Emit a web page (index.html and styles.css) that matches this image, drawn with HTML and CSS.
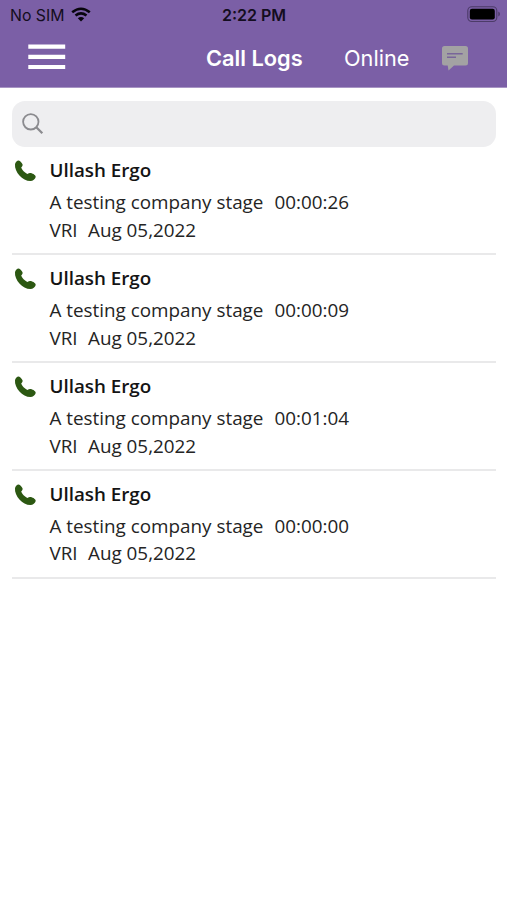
FILE: index.html
```html
<!DOCTYPE html>
<html lang="en">
<head>
<meta charset="utf-8">
<meta name="viewport" content="width=device-width">
<title>Call Logs</title>
<link rel="stylesheet" href="styles.css">
</head>
<body>
<svg width="0" height="0" class="defs" aria-hidden="true">
  <symbol id="phone" viewBox="0 0 22 22"><path d="M1 4.2C1.2 2.2 2.8 .5 4.8 .4C6 .4 8 2.8 8.6 4.5C8.8 5.7 8.2 6.6 7.2 7.6C7.8 9.8 10.9 13 13.6 14C14.5 13.2 15.5 12.9 16.7 13.1C19.4 13.6 22 15.6 21.7 17.1C21.2 19.4 19 21.1 16.4 21.1C8.5 20.9 .3 11.8 1 4.2Z"/></symbol>
</svg>
<header class="header">
  <div class="status">
    <span class="carrier">No SIM</span>
    <svg class="wifi" viewBox="0 0 20 15"><path d="M1.2 5.3Q10-1.8 18.8 5.3M4.5 8.5Q10 4.2 15.5 8.5" fill="none" stroke="#08050d" stroke-width="2.6"/><path d="M6.8 11.2Q10 8.6 13.2 11.2L10 14.5Z" fill="#08050d"/></svg>
    <span class="clock">2:22 PM</span>
    <svg class="battery" viewBox="0 0 34 17"><rect x=".8" y=".8" width="29" height="14.7" rx="4" fill="none" stroke="#4c3b68" stroke-width="1.1"/><rect x="2.8" y="2.8" width="25" height="10.7" rx="2.2" fill="#000"/><path d="M31.3 5.6Q33 6.2 33 8.1Q33 10 31.3 10.6Z" fill="#4c3b68"/></svg>
  </div>
  <div class="nav">
    <svg class="menu" viewBox="0 0 38 26"><path d="M.3 2.6H37.2M.3 12.8H37.2M.3 23H37.2" stroke="#fff" stroke-width="4.2"/></svg>
    <h1 class="title">Call Logs</h1>
    <span class="online">Online</span>
    <svg class="chat" viewBox="0 0 26 25"><path d="M2.5 0H23.5Q26 0 26 2.5V17Q26 19.5 23.5 19.5H12L6.5 24.5L5.7 19.5H2.5Q0 19.5 0 17V2.5Q0 0 2.5 0Z" fill="#a3a2a3"/><path d="M5 7.8H20.7M5 11.2H14" stroke="#79659a" stroke-width="1.5"/></svg>
  </div>
</header>
<main class="content">
  <div class="search"><svg class="lens" viewBox="0 0 22 22"><circle cx="8.8" cy="8.8" r="7.7"/><path d="M14.3 14.3L20.3 20.3" stroke-width="2.3"/></svg></div>
  <ul class="logs">
    <li class="log"><svg class="phone"><use href="#phone"/></svg><div class="info"><h2 class="name">Ullash Ergo</h2><p class="line"><span class="company">A testing company stage</span><span>00:00:26</span></p><p class="line"><span class="kind">VRI</span><span>Aug 05,2022</span></p></div></li>
    <li class="log"><svg class="phone"><use href="#phone"/></svg><div class="info"><h2 class="name">Ullash Ergo</h2><p class="line"><span class="company">A testing company stage</span><span>00:00:09</span></p><p class="line"><span class="kind">VRI</span><span>Aug 05,2022</span></p></div></li>
    <li class="log"><svg class="phone"><use href="#phone"/></svg><div class="info"><h2 class="name">Ullash Ergo</h2><p class="line"><span class="company">A testing company stage</span><span>00:01:04</span></p><p class="line"><span class="kind">VRI</span><span>Aug 05,2022</span></p></div></li>
    <li class="log"><svg class="phone"><use href="#phone"/></svg><div class="info"><h2 class="name">Ullash Ergo</h2><p class="line"><span class="company">A testing company stage</span><span>00:00:00</span></p><p class="line"><span class="kind">VRI</span><span>Aug 05,2022</span></p></div></li>
  </ul>
</main>
</body>
</html>
```
FILE: styles.css
```css
* { box-sizing: border-box; margin: 0; padding: 0; }
body { background: #fff; font-family: "Open Sans", sans-serif; color: #242424; }
svg { display: block; flex: none; }
.defs { position: absolute; }
.header { height: 88px; background: #7b5fa6; border-bottom: 1px solid #a895c4; font-family: Inter, sans-serif; }
.status { display: flex; align-items: center; height: 29px; padding: 0 6px 0 10px; color: #140d20; }
.carrier { width: 61px; padding-top: 2px; font-size: 15.8px; line-height: 29px; white-space: nowrap; }
.wifi { width: 20px; height: 15px; margin-right: 131px; }
.clock { padding-top: 2px; font-size: 16px; font-weight: 600; line-height: 29px; white-space: nowrap; }
.battery { width: 34px; height: 17px; margin: 0 0 1px auto; }
.nav { display: flex; align-items: center; height: 57px; padding-left: 28px; color: #fff; }
.menu { width: 38px; height: 26px; margin: 0 140px 2px 0; }
.title { width: 138px; font-size: 21.8px; font-weight: 600; line-height: 30px; white-space: nowrap; }
.online { width: 98px; font-size: 21.7px; line-height: 30px; white-space: nowrap; }
.chat { width: 26px; height: 25px; margin-top: 2px; }
.content { padding: 13px 11px 0 12px; }
.search { display: flex; align-items: center; height: 46px; padding-left: 10px; border-radius: 13px; background: #eeeef0; }
.lens { width: 22px; height: 22px; fill: none; stroke: #8b8b8f; stroke-width: 1.8; }
.logs { list-style: none; }
.log { display: flex; height: 107.9px; padding: 9.4px 0 0 2px; border-bottom: 2px solid #e9e9ea; }
.phone { width: 22px; height: 22px; margin: 4px 13.5px 0 0; fill: #2c5812; }
.name { height: 32.6px; font-size: 18.8px; font-weight: 600; line-height: 28px; color: #141414; white-space: nowrap; }
.line { display: flex; font-size: 18.85px; line-height: 27.8px; white-space: nowrap; }
.company { width: 225px; }
.kind { width: 38.5px; }
```
